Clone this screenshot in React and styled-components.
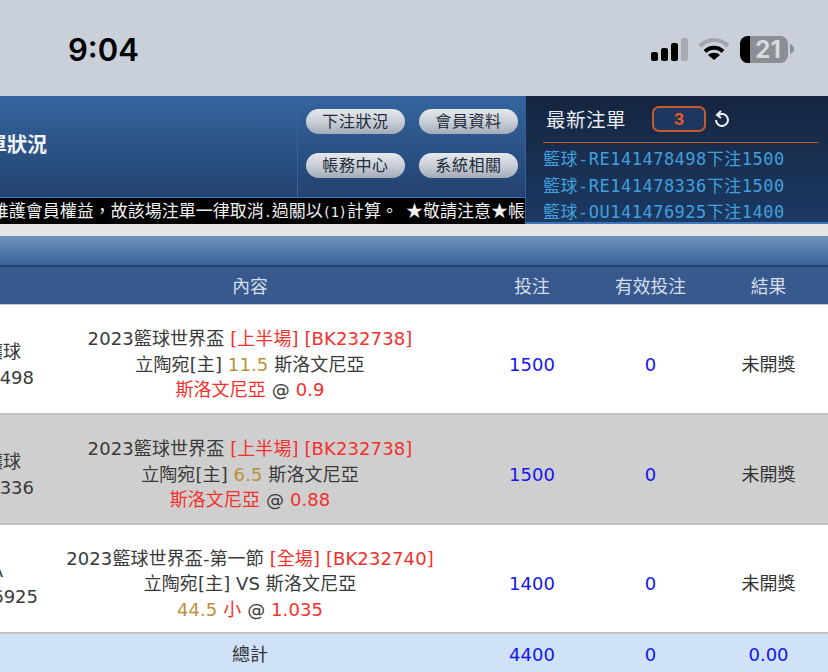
import React from "react";
import styled, { createGlobalStyle } from "styled-components";

const Global = createGlobalStyle`
  html, body { margin: 0; padding: 0; background: #fff; overflow: hidden; }
  #root { width: 828px; height: 672px; overflow: hidden; }
`;
const CJK = `"Noto Sans CJK TC", sans-serif`;
const SANS = `"DejaVu Sans", "Noto Sans CJK TC", sans-serif`;
const MONO = `"DejaVu Sans Mono", "Noto Sans CJK TC", monospace`;

const Phone = styled.div`width: 828px; height: 672px; overflow: hidden; display: flex; flex-direction: column; font-family: ${SANS};`;
const StatusBar = styled.div`
  height: 96px; flex: none; background: #c9d0da; display: flex; align-items: center;
  justify-content: space-between; padding: 0 34px 0 68px; box-sizing: border-box;
`;
const Time = styled.div`font: 600 31px/1 Inter, sans-serif; color: #000; position: relative; top: 1px;`;
const StatusIcons = styled.div`display: flex; align-items: center; gap: 10px; position: relative; top: 1px;`;
const Battery = styled.div`
  position: relative; width: 48px; height: 27px; border-radius: 8px; overflow: hidden;
  background: #8b8f94; color: #d6dae0; font: 700 24px/27px Inter, sans-serif; text-align: center;
  &::before { content: ""; position: absolute; left: 0; top: 0; bottom: 0; width: 10px; background: #000; }
`;
const BatteryNum = styled.span`position: relative; left: 4px;`;
const BatteryWrap = styled.div`display: flex; align-items: center; gap: 2px;`;

const Header = styled.header`height: 128px; flex: none; display: flex; background: #162a4a;`;
const HeaderMain = styled.div`width: 525px; flex: none; display: flex; flex-direction: column;`;
const HeaderTop = styled.div`
  height: 102px; flex: none; display: flex;
  background: linear-gradient(#34659f 0%, #23426f 100%);
  border-bottom: 1px solid #3b75bb; box-sizing: border-box;
`;
const TitleBox = styled.div`
  width: 298px; flex: none; display: flex; justify-content: flex-end; align-items: center; overflow: hidden;
  border-right: 1px solid #3a659c; box-sizing: border-box; padding: 0 250px 6px 0;
`;
const Title = styled.div`color: #f2f5f8; font: 700 20px/1 ${CJK}; white-space: nowrap; flex: none;`;
const ButtonGrid = styled.div`
  flex: 1; display: grid; grid-template-columns: 99px 99px; column-gap: 14px; row-gap: 19px;
  padding: 13px 0 0 8px; align-content: start;
`;
const Pill = styled.div`
  height: 25px; border-radius: 13px; background: linear-gradient(#e6e9ee 0%, #c6ccd5 55%, #a3abb8 100%);
  color: #222b38; font: 400 16px/23px ${CJK}; text-align: center; letter-spacing: 0.6px;
`;
const Ticker = styled.div`
  height: 26px; flex: none; background: #000; color: #f0f0f0; display: flex; justify-content: flex-end; align-items: center;
  overflow: hidden; white-space: nowrap; font: 400 17px/26px ${CJK};
`;
const TickerText = styled.span`flex: none;`;
const TickerLatin = styled.span`font: 400 13.4px/26px ${MONO}; white-space: pre;`;

const Notice = styled.aside`
  flex: 1; display: flex; flex-direction: column; padding-left: 1px; border-bottom: 2px solid #3b75bb;
  border-left: 1px solid #2f5f9c;
  background: linear-gradient(#15253f 0%, #1c3963 100%); box-sizing: border-box; min-width: 0;
`;
const NoticeHead = styled.div`
  height: 47px; flex: none; margin: 0 10px 0 16px; display: flex; align-items: center; padding-left: 3px; box-sizing: border-box;
  border-bottom: 1px solid #c45a28;
`;
const NoticeTitle = styled.div`color: #e9edf2; font: 400 19.5px/1 ${CJK}; letter-spacing: 0.5px; width: 106px; flex: none;`;
const Counter = styled.div`
  width: 54px; height: 26px; box-sizing: border-box; border: 2px solid #c65a28; border-radius: 7px; background: #1d3760;
  color: #e8592a; font: 700 16px/22px Inter, sans-serif; text-align: center; flex: none;
`;
const Refresh = styled.svg`margin-left: 7px; flex: none;`;
const NoticeList = styled.div`padding: 3px 0 0 16px; display: flex; flex-direction: column;`;
const NoticeRow = styled.div`height: 26.5px; color: #41a0dc; font: 400 17px/26.5px ${MONO}; white-space: nowrap; letter-spacing: 0.5px;`;

const Gap = styled.div`height: 12px; flex: none; background: #e6e6e6;`;
const Band = styled.div`
  height: 31px; flex: none; background: linear-gradient(#7294bd 0%, #3d6699 90%); border-bottom: 2px solid #1f3f6c; box-sizing: border-box;
`;
const Cols = `grid-template-columns: 28px 444px 120px 117px 119px;`;
const HeadRow = styled.div`
  display: grid; ${Cols} height: 38px; flex: none; background: #38598e; border-bottom: 1px solid #c4c8cc; box-sizing: border-box;
  align-items: center; text-align: center; color: #d5deea; font: 400 17.8px/1 ${CJK};
`;
const Row = styled.div`
  display: grid; ${Cols} height: ${p => p.$h}px; flex: none; align-items: center; text-align: center;
  background: ${p => p.$bg}; border-bottom: 2px solid #c4c4c4; box-sizing: border-box; color: #3a3a3a;
  font: 400 18px/25.6px ${SANS}; padding-top: 11px;
`;
const TypeCell = styled.div`
  white-space: nowrap; display: flex; flex-direction: column; align-items: flex-end; justify-content: center;
`;
const TypeLabel = styled.div`margin-right: ${p => p.$mr}px;`;
const TypeId = styled.div`margin-right: ${p => p.$mr}px;`;
const Content = styled.div`white-space: nowrap; letter-spacing: 0.1px;`;
const Red = styled.span`color: #f5302c;`;
const Gold = styled.span`color: #b8923a;`;
const Blue = styled.div`color: #1515ee;`;
const Plain = styled.div`color: #333;`;
const TotalRow = styled.div`
  display: grid; ${Cols} flex: 1; align-items: center; text-align: center; background: #cfe2f8; color: #333;
  font: 400 18px/1 ${SANS}; padding-top: 3px;
`;

const Signal = () => (
  <svg width="37" height="24" viewBox="0 0 37 24">
    <rect x="0" y="15" width="7" height="9" rx="2" fill="#000" />
    <rect x="10" y="11" width="7" height="13" rx="2" fill="#000" />
    <rect x="20" y="6" width="7" height="18" rx="2" fill="#000" />
    <rect x="30" y="1" width="7" height="23" rx="2" fill="#a9adb3" />
  </svg>
);
const Wifi = () => (
  <svg width="32" height="24" viewBox="0 0 32 24" fill="none">
    <path d="M2 9 C10 1 22 1 30 9" stroke="#a3a7ad" strokeWidth="4" />
    <path d="M7 14.5 C12 9.5 20 9.5 25 14.5" stroke="#000" strokeWidth="4" />
    <path d="M16 23 L10 18 C13 15 19 15 22 18 Z" fill="#000" />
  </svg>
);

const rows = [
  { bg: "#fff", h: 110, label: "滾球讓球", id: "141478498", lm: 7, im: -6, title: "2023籃球世界盃", tag: "[上半場] [BK232738]", line2: <>立陶宛[主] <Gold>11.5</Gold> 斯洛文尼亞</>, line3: <><Red>斯洛文尼亞</Red> @ <Red>0.9</Red></>, amt: 1500 },
  { bg: "#cfcfcf", h: 110, label: "滾球讓球", id: "141478336", lm: 7, im: -6, title: "2023籃球世界盃", tag: "[上半場] [BK232738]", line2: <>立陶宛[主] <Gold>6.5</Gold> 斯洛文尼亞</>, line3: <><Red>斯洛文尼亞</Red> @ <Red>0.88</Red></>, amt: 1500 },
  { bg: "#fff", h: 109, label: "NBA", id: "141476925", lm: 25, im: -10, title: "2023籃球世界盃-第一節", tag: "[全場] [BK232740]", line2: <>立陶宛[主] VS 斯洛文尼亞</>, line3: <><Gold>44.5</Gold> <Red>小</Red> @ <Red>1.035</Red></>, amt: 1400 },
];

export default function App() {
  return (
    <Phone>
      <Global />
      <StatusBar>
        <Time>9:04</Time>
        <StatusIcons>
          <Signal />
          <Wifi />
          <BatteryWrap>
            <Battery><BatteryNum>21</BatteryNum></Battery>
            <svg width="4" height="10" viewBox="0 0 4 10"><path d="M0 0 C3 1 4 3 4 5 C4 7 3 9 0 10 Z" fill="#8b8f94" /></svg>
          </BatteryWrap>
        </StatusIcons>
      </StatusBar>
      <Header>
        <HeaderMain>
          <HeaderTop>
            <TitleBox><Title>注單狀況</Title></TitleBox>
            <ButtonGrid>
              <Pill>下注狀況</Pill><Pill>會員資料</Pill>
              <Pill>帳務中心</Pill><Pill>系統相關</Pill>
            </ButtonGrid>
          </HeaderTop>
          <Ticker>
            <TickerText>
              維護會員權益，故該場注單一律取消<TickerLatin>.</TickerLatin>過關以<TickerLatin>(1)</TickerLatin>計算。<TickerLatin> </TickerLatin>★敬請注意★帳
            </TickerText>
          </Ticker>
        </HeaderMain>
        <Notice>
          <NoticeHead>
            <NoticeTitle>最新注單</NoticeTitle>
            <Counter>3</Counter>
            <Refresh width="17" height="18" viewBox="0 0 17 18" fill="none">
              <path d="M5 5.5 A6 6 0 1 1 3 10" stroke="#f2f4f7" strokeWidth="2" />
              <path d="M8 1 L4 5 L8 8" stroke="#f2f4f7" strokeWidth="2" fill="none" />
            </Refresh>
          </NoticeHead>
          <NoticeList>
            <NoticeRow>籃球-RE141478498下注1500</NoticeRow>
            <NoticeRow>籃球-RE141478336下注1500</NoticeRow>
            <NoticeRow>籃球-OU141476925下注1400</NoticeRow>
          </NoticeList>
        </Notice>
      </Header>
      <Gap />
      <Band />
      <HeadRow><span /><span>內容</span><span>投注</span><span>有效投注</span><span>結果</span></HeadRow>
      {rows.map(r => (
        <Row key={r.id} $bg={r.bg} $h={r.h}>
          <TypeCell>
            <TypeLabel $mr={r.lm}>{r.label}</TypeLabel>
            <TypeId $mr={r.im}>{r.id}</TypeId>
          </TypeCell>
          <Content>
            <div>{r.title} <Red>{r.tag}</Red></div>
            <div>{r.line2}</div>
            <div>{r.line3}</div>
          </Content>
          <Blue>{r.amt}</Blue>
          <Blue>0</Blue>
          <Plain>未開獎</Plain>
        </Row>
      ))}
      <TotalRow><span /><span>總計</span><Blue>4400</Blue><Blue>0</Blue><Blue>0.00</Blue></TotalRow>
    </Phone>
  );
}
